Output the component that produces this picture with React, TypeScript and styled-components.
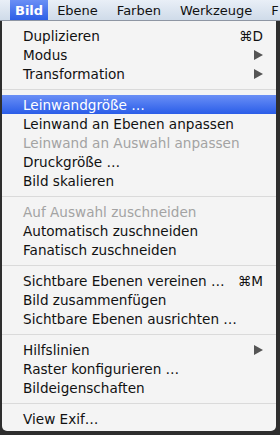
import React from 'react';
import styled, { createGlobalStyle } from 'styled-components';

const GlobalStyle = createGlobalStyle`
    html, body {
        margin: 0;
        padding: 0;
        background: #2e2e2e;
    }
    body {
        font-family: 'DejaVu Sans', 'Liberation Sans', sans-serif;
    }
`;

const StyledPage = styled.div`
    width: 280px;
    height: 435px;
    display: flex;
    flex-direction: column;
    overflow: hidden;
    background: #2e2e2e;
`;

const StyledMenuBar = styled.div`
    display: flex;
    height: 20px;
    padding-left: 10px;
    background: linear-gradient(#e9eff7, #cfdbe9);
    border-bottom: 1px solid #8e96a3;
    flex-shrink: 0;
    white-space: nowrap;
    overflow: hidden;
`;

const StyledBarItem = styled.div<{ $active?: boolean }>`
    display: flex;
    align-items: center;
    padding: 0 ${(p) => (p.$active ? '5px' : '9px')};
    margin-right: ${(p) => (p.$active ? '0' : '1px')};
    font-size: 13px;
    font-weight: ${(p) => (p.$active ? 'bold' : 'normal')};
    color: ${(p) => (p.$active ? '#fff' : '#111')};
    background: ${(p) => (p.$active ? 'linear-gradient(#6a8ff5, #2d5fe6)' : 'transparent')};
`;

const StyledDropdown = styled.div`
    margin-left: 2px;
    width: 274px;
    background: #f4f4f4;
    border-radius: 0 0 5px 5px;
    padding: 5px 0 3px;
    display: flex;
    flex-direction: column;
`;

const StyledRow = styled.div<{ $active?: boolean; $disabled?: boolean }>`
    display: flex;
    align-items: center;
    justify-content: space-between;
    height: 19px;
    padding: 0 12px 0 21px;
    font-size: 13.6px;
    color: ${(p) => (p.$active ? '#fff' : p.$disabled ? '#a3a3a3' : '#111')};
    background: ${(p) => (p.$active ? 'linear-gradient(#6a8ff6, #2a5de8)' : 'transparent')};
`;

const StyledShortcut = styled.span`
    font-size: 13.6px;
    padding-right: 1px;
`;

const StyledArrow = styled.span`
    width: 0;
    height: 0;
    border-top: 5px solid transparent;
    border-bottom: 5px solid transparent;
    border-left: 9px solid #555;
    margin-right: 1px;
`;

const StyledSeparator = styled.div`
    height: 12px;
    display: flex;
    align-items: center;

    &::after {
        content: '';
        flex: 1;
        height: 1px;
        background: #dadada;
    }
`;

type Item =
    | { sep: true }
    | { label: string; shortcut?: string; submenu?: boolean; active?: boolean; disabled?: boolean; sep?: false };

const items: Item[] = [
    { label: 'Duplizieren', shortcut: '⌘D' },
    { label: 'Modus', submenu: true },
    { label: 'Transformation', submenu: true },
    { sep: true },
    { label: 'Leinwandgröße …', active: true },
    { label: 'Leinwand an Ebenen anpassen' },
    { label: 'Leinwand an Auswahl anpassen', disabled: true },
    { label: 'Druckgröße …' },
    { label: 'Bild skalieren' },
    { sep: true },
    { label: 'Auf Auswahl zuschneiden', disabled: true },
    { label: 'Automatisch zuschneiden' },
    { label: 'Fanatisch zuschneiden' },
    { sep: true },
    { label: 'Sichtbare Ebenen vereinen …', shortcut: '⌘M' },
    { label: 'Bild zusammenfügen' },
    { label: 'Sichtbare Ebenen ausrichten …' },
    { sep: true },
    { label: 'Hilfslinien', submenu: true },
    { label: 'Raster konfigurieren …' },
    { label: 'Bildeigenschaften' },
    { sep: true },
    { label: 'View Exif…' },
];

export default function App() {
    return (
        <>
            <GlobalStyle />
            <StyledPage>
                <StyledMenuBar>
                    <StyledBarItem $active>Bild</StyledBarItem>
                    <StyledBarItem>Ebene</StyledBarItem>
                    <StyledBarItem>Farben</StyledBarItem>
                    <StyledBarItem>Werkzeuge</StyledBarItem>
                    <StyledBarItem>F</StyledBarItem>
                </StyledMenuBar>
                <StyledDropdown>
                    {items.map((item, i) =>
                        item.sep ? (
                            <StyledSeparator key={i} />
                        ) : (
                            <StyledRow key={i} $active={item.active} $disabled={item.disabled}>
                                <span>{item.label}</span>
                                {item.shortcut && <StyledShortcut>{item.shortcut}</StyledShortcut>}
                                {item.submenu && <StyledArrow />}
                            </StyledRow>
                        ),
                    )}
                </StyledDropdown>
            </StyledPage>
        </>
    );
}
